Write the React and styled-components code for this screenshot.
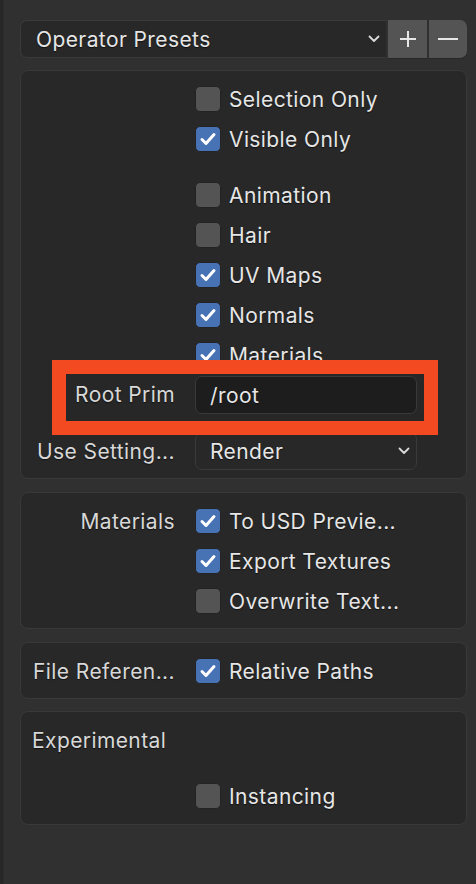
import React from 'react';
import styled, { createGlobalStyle } from 'styled-components';

const GlobalStyle = createGlobalStyle`
  body {
    margin: 0;
    background: #303030;
    font-family: Inter, "Noto Sans", "DejaVu Sans", sans-serif;
    color: #e6e6e6;
  }
`;

const Page = styled.div`
  display: flex;
  min-height: 884px;
  background: #303030;
`;

const SideStrip = styled.div`
  width: 4px;
  background: #272727;
  border-right: 1px solid #2b2b2b;
  box-sizing: border-box;
`;

const Content = styled.div`
  flex: 1;
  display: flex;
  flex-direction: column;
  gap: 13px;
  padding: 20px 9px 0 16px;
`;

const PresetBar = styled.div`
  display: flex;
  height: 38px;
  gap: 2px;
  margin-bottom: -1px;
`;

const PresetSelect = styled.div`
  flex: 1;
  display: flex;
  align-items: center;
  justify-content: space-between;
  padding: 0 6px 0 15px;
  background: #282828;
  border: 1px solid #3a3a3a;
  border-right: none;
  border-radius: 7px 0 0 7px;
  font-size: 21px;
  letter-spacing: 0.4px;
  text-shadow: 0 1px 1px rgba(0, 0, 0, 0.6);
`;

const PresetButton = styled.div`
  width: ${(p) => p.w || 38}px;
  display: flex;
  align-items: center;
  justify-content: center;
  background: #545454;
  border-radius: ${(p) => (p.last ? '0 7px 7px 0' : '0')};
  box-shadow: 0 1px 0 #262626;
`;

const Panel = styled.div`
  background: #282828;
  border: 1px solid #393939;
  border-radius: 8px;
  padding: ${(p) => p.pad || '8px 0 7px'};
  margin-top: ${(p) => p.mt || 0}px;
`;

const Row = styled.div`
  display: grid;
  grid-template-columns: 154px 222px;
  column-gap: 20px;
  align-items: center;
  height: ${(p) => p.h || 40}px;
`;

const Label = styled.div`
  text-align: right;
  font-size: 21px;
  letter-spacing: 0.4px;
  color: #d8d8d8;
  white-space: nowrap;
  text-shadow: 0 1px 1px rgba(0, 0, 0, 0.6);
`;

const Heading = styled.div`
  height: 40px;
  display: flex;
  align-items: center;
  padding-left: 11px;
  font-size: 21px;
  letter-spacing: 0.4px;
  color: #d8d8d8;
  text-shadow: 0 1px 1px rgba(0, 0, 0, 0.6);
`;

const Spacer = styled.div`
  height: ${(p) => p.h || 16}px;
`;

const Check = styled.div`
  display: flex;
  align-items: center;
  gap: 8px;
  font-size: 21px;
  letter-spacing: 0.4px;
  white-space: nowrap;
  text-shadow: 0 1px 1px rgba(0, 0, 0, 0.6);
`;

const Box = styled.div`
  width: 26px;
  height: 26px;
  flex: none;
  box-sizing: border-box;
  border-radius: 5px;
  border: 1px solid #232323;
  background: ${(p) => (p.on ? '#4772b3' : '#545454')};
  display: flex;
  align-items: center;
  justify-content: center;
`;

const Highlight = styled.div`
  position: relative;
  z-index: 1;
  height: 75px;
  box-sizing: border-box;
  margin: -15px 28px -3px 31px;
  border: 14px solid #f34a22;
  background: #272727;
  display: grid;
  grid-template-columns: 109px 222px;
  column-gap: 20px;
  align-items: start;
  padding-top: 2px;
`;

const HighlightLabel = styled(Label)`
  line-height: 38px;
`;

const TextField = styled.div`
  height: 38px;
  box-sizing: border-box;
  display: flex;
  align-items: center;
  padding-left: 14px;
  background: #1d1d1d;
  border: 1px solid #3a3a3a;
  border-radius: 7px;
  font-size: 21px;
  letter-spacing: 0.4px;
  text-shadow: 0 1px 1px rgba(0, 0, 0, 0.6);
`;

const Dropdown = styled(TextField)`
  background: #282828;
  justify-content: space-between;
  padding-right: 6px;
`;

const CheckMark = () => (
  <svg width="18" height="18" viewBox="0 0 18 18">
    <path d="M3 9.5 L7 13.5 L15 4.5" fill="none" stroke="#fff" strokeWidth="3" strokeLinecap="round" strokeLinejoin="round" />
  </svg>
);

const Chevron = () => (
  <svg width="12" height="8" viewBox="0 0 12 8">
    <path d="M1.5 1.5 L6 6 L10.5 1.5" fill="none" stroke="#dadada" strokeWidth="1.8" strokeLinecap="round" strokeLinejoin="round" />
  </svg>
);

const PlusIcon = () => (
  <svg width="18" height="18" viewBox="0 0 18 18">
    <path d="M9 1 V17 M1 9 H17" stroke="#e6e6e6" strokeWidth="2" />
  </svg>
);

const MinusIcon = () => (
  <svg width="22" height="18" viewBox="0 0 22 18">
    <path d="M1 9 H21" stroke="#e6e6e6" strokeWidth="2" />
  </svg>
);

const CheckItem = ({ on, children }) => (
  <Check>
    <Box on={on}>{on && <CheckMark />}</Box>
    {children}
  </Check>
);

const CheckRow = ({ label, on, text }) => (
  <Row>
    <Label>{label}</Label>
    <CheckItem on={on}>{text}</CheckItem>
  </Row>
);

export default function App() {
  return (
    <>
      <GlobalStyle />
      <Page>
        <SideStrip />
        <Content>
          <PresetBar>
            <PresetSelect>
              Operator Presets
              <Chevron />
            </PresetSelect>
            <PresetButton w={39}><PlusIcon /></PresetButton>
            <PresetButton w={38} last><MinusIcon /></PresetButton>
          </PresetBar>

          <Panel pad="8px 0 8px">
            <CheckRow text="Selection Only" />
            <CheckRow on text="Visible Only" />
            <Spacer h={16} />
            <CheckRow text="Animation" />
            <CheckRow text="Hair" />
            <CheckRow on text="UV Maps" />
            <CheckRow on text="Normals" />
            <CheckRow on text="Materials" />
            <Highlight>
              <HighlightLabel>Root Prim</HighlightLabel>
              <TextField>/root</TextField>
            </Highlight>
            <Row h={38}>
              <Label>Use Setting...</Label>
              <Dropdown>
                Render
                <Chevron />
              </Dropdown>
            </Row>
          </Panel>

          <Panel pad="8px 0 7px">
            <CheckRow label="Materials" on text="To USD Previe..." />
            <CheckRow on text="Export Textures" />
            <CheckRow text="Overwrite Text..." />
          </Panel>

          <Panel pad="8px 0 7px">
            <CheckRow label="File Referen..." on text="Relative Paths" />
          </Panel>

          <Panel pad="8px 0 8px" mt={-1}>
            <Heading>Experimental</Heading>
            <Spacer h={16} />
            <CheckRow text="Instancing" />
          </Panel>
        </Content>
      </Page>
    </>
  );
}
